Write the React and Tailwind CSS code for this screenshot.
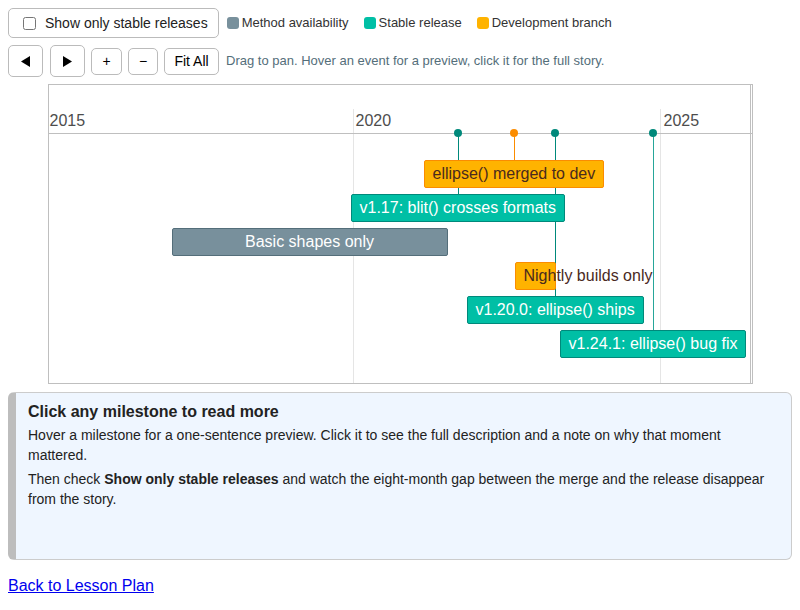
import { useState } from 'react'

const years = [
  { label: '2015', x: 1, grid: null },
  { label: '2020', x: 307, grid: 304 },
  { label: '2025', x: 615, grid: 611 },
]

// stems from the axis down to each point item (inner px of the timeline box)
const stems = [
  { x: 409, h: 61, line: 'bg-[#00897b]', dot: 'bg-[#00897b]' },
  { x: 465, h: 27, line: 'bg-[#fb8c00]', dot: 'bg-[#fb8c00]' },
  { x: 506, h: 163, line: 'bg-[#00897b]', dot: 'bg-[#00897b]' },
  { x: 604, h: 197, line: 'bg-[#26a69a]', dot: 'bg-[#00897b]' },
]

const teal = 'bg-[#00bfa5] border-[#00897b] text-white'
const orange = 'bg-[#ffb300] border-[#fb8c00] text-[#4a2a1e]'
const gray = 'bg-[#78909c] border-[#546e7a] text-white'

function Item({ className, children }) {
  return (
    <div className={`absolute h-[28px] border rounded-[2px] px-2 py-[4px] text-[16px] leading-[18px] whitespace-nowrap ${className}`}>
      {children}
    </div>
  )
}

function Timeline() {
  return (
    <div className="relative mx-auto mt-[7px] w-[705px] h-[300px] border border-[#bfbfbf] bg-white overflow-hidden">
      {years.map((y) =>
        y.grid !== null ? (
          <div key={y.label + 'g'} className="absolute top-[24px] bottom-0 w-px bg-[#e5e5e5]" style={{ left: y.grid }} />
        ) : null
      )}
      {years.map((y) => (
        <span key={y.label} className="absolute top-[28px] text-[16px] leading-[16px] text-[#4d4d4d]" style={{ left: y.x }}>
          {y.label}
        </span>
      ))}
      <div className="absolute left-0 right-0 top-[48px] h-px bg-[#bfbfbf]" />
      <div className="absolute top-0 bottom-0 right-[1px] w-px bg-[#bfbfbf]" />

      {stems.map((s) => (
        <div key={s.x} className={`absolute top-[48px] w-px ${s.line}`} style={{ left: s.x, height: s.h }} />
      ))}

      <Item className={`left-[375px] top-[75px] ${orange}`}>ellipse() merged to dev</Item>
      <Item className={`left-[302px] top-[109px] ${teal}`}>v1.17: blit() crosses formats</Item>
      <Item className={`left-[123px] top-[143px] w-[276px] text-center ${gray}`}>Basic shapes only</Item>
      <Item className={`left-[466px] top-[177px] w-[41px] overflow-visible ${orange}`}>Nightly builds only</Item>
      <Item className={`left-[418px] top-[211px] ${teal}`}>v1.20.0: ellipse() ships</Item>
      <Item className={`left-[511px] top-[245px] ${teal}`}>v1.24.1: ellipse() bug fix</Item>

      {stems.map((s) => (
        <div key={s.x + 'd'} className={`absolute top-[44px] w-[8px] h-[8px] rounded-full ${s.dot}`} style={{ left: s.x - 3.5 }} />
      ))}
    </div>
  )
}

function Legend({ color, label }) {
  return (
    <span className="flex items-center gap-[3px] text-[13px] text-[#333]">
      <span className={`w-[12px] h-[12px] rounded-[3px] ${color}`} />
      {label}
    </span>
  )
}

function NavButton({ className = '', children }) {
  return (
    <button className={`flex items-center justify-center border border-[#bbb] rounded-[5px] bg-white text-[14px] text-black ${className}`}>
      {children}
    </button>
  )
}

export default function App() {
  const [stable, setStable] = useState(false)

  return (
    <div className="p-2 font-['Liberation_Sans',Arial,sans-serif] text-[#222] bg-white min-h-[610px]">
      <div className="flex items-center h-[30px]">
        <label className="flex items-center gap-[9px] h-[30px] pl-[14px] pr-[10px] border border-[#bbb] rounded-[5px] text-[14px] text-[#222] cursor-pointer">
          <input type="checkbox" checked={stable} onChange={(e) => setStable(e.target.checked)} className="w-[13px] h-[13px]" />
          Show only stable releases
        </label>
        <div className="flex items-center gap-[15px] ml-[8px]">
          <Legend color="bg-[#78909c]" label="Method availability" />
          <Legend color="bg-[#00bfa5]" label="Stable release" />
          <Legend color="bg-[#ffb300]" label="Development branch" />
        </div>
      </div>

      <div className="flex items-center gap-[6px] mt-[7px] h-[32px]">
        <NavButton className="w-[35px] h-[32px]">
          <svg width="9" height="11" viewBox="0 0 9 11"><polygon points="9,0 9,11 0,5.5" fill="#000" /></svg>
        </NavButton>
        <NavButton className="w-[35px] h-[32px] ml-[1px]">
          <svg width="9" height="11" viewBox="0 0 9 11"><polygon points="0,0 0,11 9,5.5" fill="#000" /></svg>
        </NavButton>
        <NavButton className="w-[31px] h-[27px]">+</NavButton>
        <NavButton className="w-[30px] h-[27px]">−</NavButton>
        <NavButton className="w-[55px] h-[27px]">Fit All</NavButton>
        <span className="ml-px text-[13px] text-[#546e7a]">
          Drag to pan. Hover an event for a preview, click it for the full story.
        </span>
      </div>

      <Timeline />

      <div className="mt-[8px] h-[168px] border border-[#ccc] border-l-[8px] border-l-[#bdbdbd] rounded-[6px] bg-[#eff6ff] pl-[12px] pr-[12px] pt-[9px]">
        <h3 className="text-[16px] leading-[19px] font-bold text-[#222]">Click any milestone to read more</h3>
        <p className="mt-[5px] text-[14px] leading-[19.6px] text-[#222]">
          Hover a milestone for a one-sentence preview. Click it to see the full description and a note on why that moment mattered.
        </p>
        <p className="mt-[5px] text-[14px] leading-[19.6px] text-[#222]">
          Then check <strong>Show only stable releases</strong> and watch the eight-month gap between the merge and the release disappear from the story.
        </p>
      </div>

      <p className="mt-[14px] text-[16px]">
        <a href="#" className="text-[#0000ee] underline">Back to Lesson Plan</a>
      </p>
    </div>
  )
}
